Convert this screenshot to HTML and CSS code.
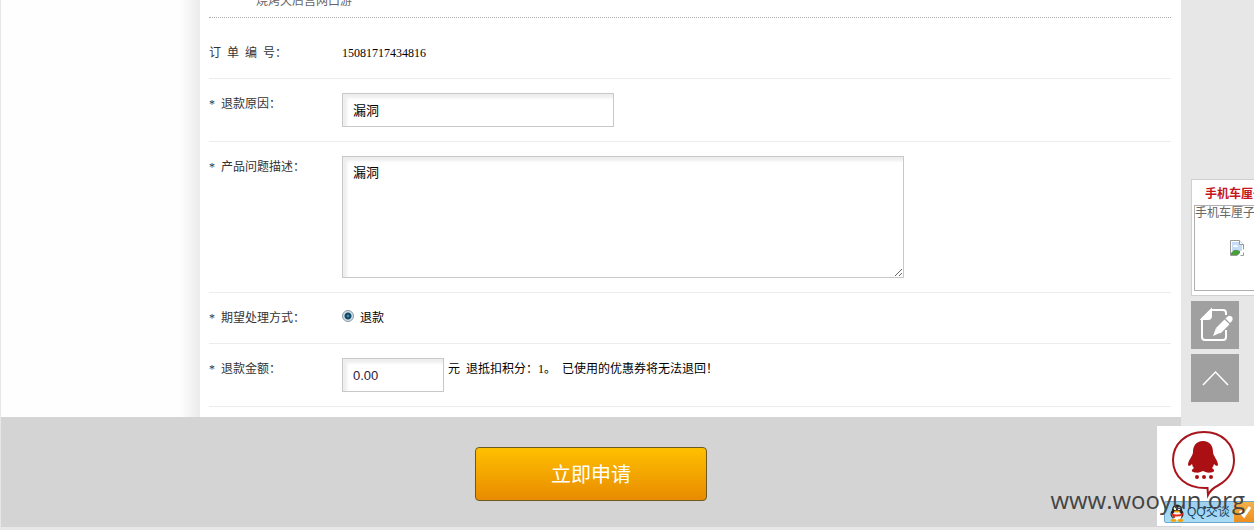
FILE: index.html
```html
<!DOCTYPE html>
<html lang="zh-CN">
<head>
<meta charset="utf-8">
<title>退款申请</title>
<link rel="stylesheet" href="styles.css">
</head>
<body>
<div class="page">
  <main class="main">
    <form class="form">
      <div class="columns">
        <div class="side"></div>
        <div class="fields">
          <div class="product">烧烤天后宫网口游</div>
          <div class="row row-first">
            <span class="label">订&nbsp; 单&nbsp; 编&nbsp; 号：</span>
            <span class="value">15081717434816</span>
          </div>
          <div class="row">
            <label class="label" for="reason">*&nbsp; 退款原因：</label>
            <input class="box box-reason" id="reason" type="text" value="漏洞">
          </div>
          <div class="row">
            <label class="label" for="detail">*&nbsp; 产品问题描述：</label>
            <textarea class="box box-detail" id="detail">漏洞</textarea>
          </div>
          <div class="row">
            <span class="label">*&nbsp; 期望处理方式：</span>
            <label class="choice"><input class="radio" type="radio" name="way" checked>退款</label>
          </div>
          <div class="row">
            <label class="label" for="amount">*&nbsp; 退款金额：</label>
            <input class="box box-amount" id="amount" type="text" value="0.00">
            <span class="note">元&nbsp; 退抵扣积分：1。&nbsp; 已使用的优惠券将无法退回！</span>
          </div>
        </div>
      </div>
      <div class="actions"><button class="submit" type="submit">立即申请</button></div>
    </form>
  </main>
  <aside class="rail">
    <section class="promo">
      <h2 class="promo-title">手机车厘子</h2>
      <div class="promo-body">
        <a class="promo-link" href="#">手机车厘子</a>
        <svg class="broken" width="14" height="16" viewBox="0 0 14 16">
          <path d="M.5.5h9l4 4v11H.5z" fill="#fff" stroke="#9a9a9a"/>
          <path d="M2 2h7v3h3v6H2z" fill="#c5dcf8"/>
          <path d="M9.500.5v4h4" fill="#fff" stroke="#9a9a9a"/>
          <path d="M3 7q0-2 2-2 3 0 3 2z" fill="#fff"/>
          <path d="M1 15v-2q3-4 6-3l3 1v4z" fill="#4b9e3c"/>
          <path d="M7 16l7-7v3l-4 4z" fill="#fff"/>
        </svg>
      </div>
    </section>
    <button class="tool" type="button" aria-label="反馈">
      <svg width="48" height="48" viewBox="0 0 48 48" fill="none" stroke="#fff" stroke-width="2">
        <path d="M35 14v-2q0-3-3-3H20l-9 9v18q0 3 3 3h18q3 0 3-3v-7"/>
        <path d="M20 9v6q0 3-3 3h-6z" fill="#fff"/>
        <path d="M25 27l8.500-8.500 4.500 4.500-8.500 8.500z" fill="#fff" stroke="none"/>
        <path d="M34.500 17.500l2-2q2-1.500 4 0t.5 4.500l-2 2z" fill="#fff" stroke="none"/>
        <path d="M25 27l5 4.500-8 3.500z" fill="#fff" stroke="none"/>
        <path d="M28 31l9-9" stroke="#fff" stroke-width="4"/>
      </svg>
    </button>
    <button class="tool" type="button" aria-label="返回顶部">
      <svg width="48" height="48" viewBox="0 0 48 48" fill="none" stroke="#fff" stroke-width="1.500"><path d="M12 31l12.500-13L37 31"/></svg>
    </button>
  </aside>
</div>
<a class="chat" href="#">
  <svg class="bubble" width="66" height="70" viewBox="0 0 66 70">
    <path d="M36.500 58C16 59 2 47 2 30 2 14 15 2 33 2s30 12 30 28c0 12-6 20-16 25.500Q40 59 37 65z" fill="#fff" stroke="#a8151b" stroke-width="2"/>
    <path d="M32 11c-7 0-10 5-10 11 0 4-5 8-5 13 1 2 3 0 4-1 .5 2 1 3 2 4-3 2-3 4 1 4.500 4 .5 6-.5 8-1.500 2 1 4 2 8 1.500s4-2.500 1-4.500c1-1 1.500-2 2-4 1 1 3 3 4 1 0-5-5-9-5-13 0-6-3-11-10-11z" fill="#aa0f13"/>
    <g fill="#aa0f13"><circle cx="26" cy="47" r="2"/><circle cx="33" cy="47" r="2"/><circle cx="40" cy="47" r="2"/></g>
  </svg>
  <span class="chat-bar">
    <svg class="penguin" width="16" height="18" viewBox="0 0 16 18">
      <ellipse cx="8" cy="10" rx="6.500" ry="6" fill="#222"/>
      <ellipse cx="8" cy="6" rx="5" ry="5.500" fill="#222"/>
      <ellipse cx="8" cy="12" rx="4.500" ry="4.500" fill="#fff"/>
      <ellipse cx="6" cy="4.500" rx="1.300" ry="1.700" fill="#fff"/><ellipse cx="10" cy="4.500" rx="1.300" ry="1.700" fill="#fff"/>
      <ellipse cx="8" cy="7.500" rx="3" ry="1" fill="#f4a400"/>
      <path d="M2 9q6 3 12 0v2q-6 3-12 0z" fill="#e52b1c"/><path d="M4 11h2v3H4z" fill="#e52b1c"/>
      <ellipse cx="4.500" cy="16.500" rx="3" ry="1.400" fill="#f4a400"/><ellipse cx="11.500" cy="16.500" rx="3" ry="1.400" fill="#f4a400"/>
    </svg>
    <span class="chat-text">QQ交谈</span>
    <span class="chat-check"><svg width="20" height="20" viewBox="0 0 20 20"><path d="M6 9l4 5 6-9" fill="none" stroke="#fff" stroke-width="3"/></svg></span>
  </span>
</a>
<div class="watermark">www.wooyun.org</div>
</body>
</html>
```
FILE: styles.css
```css
* { box-sizing: border-box; }
body {
  margin: 0;
  min-height: 100vh;
  overflow: hidden;
  position: relative;
  background: #e7e7e7;
  color: #000;
  font: 12px/22px "Liberation Serif", "Noto Sans CJK SC", serif;
}
.page { display: flex; padding-left: 1px; }
.main { flex: 1; min-width: 0; }
.columns { display: flex; background: #fff; }
.side {
  flex: 0 0 199px;
  background: linear-gradient(to left, #ebebeb, #fefefe 20px);
}
.fields { flex: 1; min-width: 0; padding: 0 10px 10px 9px; }
.product {
  margin-top: -10px;
  padding: 0 0 5px 47px;
  border-bottom: 1px dotted #aaa;
  color: #666;
}
.row {
  display: flex;
  align-items: flex-start;
  padding: 14px 0;
  border-bottom: 1px solid #ececec;
}
.row-first { padding-top: 24px; }
.label { flex: 0 0 133px; color: #333; }
.box {
  height: 34px;
  margin: 0;
  padding: 0 10px;
  border: 1px solid #c8c8c8;
  background: #fff;
  box-shadow: inset 4px 4px 3px #eee;
  color: #000;
  font: 13px/20px "Noto Sans CJK SC", sans-serif;
}
.box-reason { width: 272px; padding-bottom: 2px; }
.box-detail { width: 562px; height: 122px; padding-top: 5px; }
.box-amount {
  width: 102px;
  color: #2a1a3a;
  font-family: "Liberation Sans", sans-serif;
}
.choice { display: flex; gap: 6px; }
.radio {
  appearance: none;
  width: 12px;
  height: 12px;
  margin: 3px 0 0;
  border: 1px solid #8795a3;
  border-radius: 50%;
  background: radial-gradient(circle, #5fb4d6 0, #123f5c 2px, #17506f 3px, #d5e2ea 4px);
}
.note { padding-left: 4px; }
.actions {
  display: flex;
  justify-content: center;
  padding: 30px 0 26px;
  background: #d4d4d4;
}
.submit {
  width: 232px;
  height: 54px;
  padding: 0;
  border: 1px solid #6e5a20;
  border-radius: 4px;
  background: linear-gradient(#ffc000, #e88b00);
  color: #fff;
  font: 20px/30px "Noto Sans CJK SC", sans-serif;
}
.rail {
  flex: 0 0 73px;
  display: flex;
  flex-direction: column;
  gap: 5px;
  padding: 179px 0 0 10px;
  overflow: hidden;
}
.promo {
  width: 120px;
  padding: 3px 2px 4px;
  border: 1px solid #d0d0d0;
  background: #fff;
}
.promo-title {
  margin: 0;
  padding-left: 11px;
  color: #c4161c;
  font-size: 12px;
  line-height: 22px;
}
.promo-body { height: 86px; border: 1px solid #b0b0b0; }
.promo-link {
  display: block;
  color: #666;
  line-height: 14px;
  text-decoration: none;
  white-space: nowrap;
}
.broken { display: block; margin: 20px 0 0 35px; }
.tool {
  width: 48px;
  height: 48px;
  padding: 0;
  border: 0;
  background: #a0a0a0;
}
.tool svg { display: block; }
.chat {
  position: absolute;
  right: 0;
  bottom: 4px;
  width: 97px;
  height: 100px;
  padding: 4px 0 0 7px;
  overflow: hidden;
  background: #fff;
  text-decoration: none;
}
.bubble { display: block; margin-left: 7px; }
.chat-bar {
  display: flex;
  width: 98px;
  height: 22px;
  margin-top: 1px;
  border: 1px solid #6ea7cc;
  border-radius: 2px;
  background: linear-gradient(#9fd0ee, #a9dcf6);
}
.penguin { flex: none; margin: 2px 2px 0 4px; }
.chat-text {
  flex: 1;
  color: #17486b;
  font: 12px/20px "Liberation Sans", "Noto Sans CJK SC", sans-serif;
  white-space: nowrap;
}
.chat-check {
  flex: 0 0 27px;
  background: linear-gradient(#f4b04a, #ee8f1e);
}
.watermark {
  position: absolute;
  right: 9px;
  bottom: 13px;
  color: #444;
  font: 24px/34px "Open Sans", sans-serif;
}
```
